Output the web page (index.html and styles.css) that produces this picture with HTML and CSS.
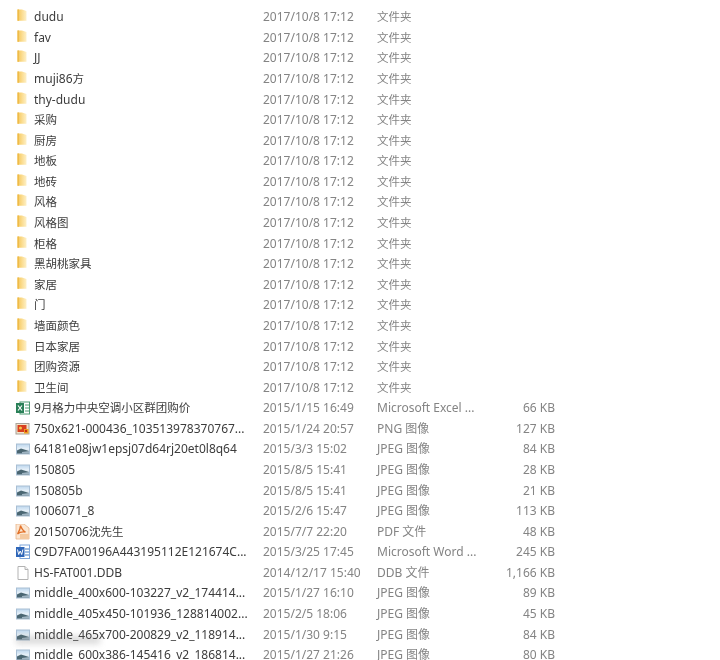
FILE: index.html
```html
<!DOCTYPE html>
<html lang="zh">
<head>
<meta charset="utf-8">
<title>文件列表</title>
<link rel="stylesheet" href="styles.css">
</head>
<body>
<svg class="defs" width="0" height="0" aria-hidden="true">
<defs>
<linearGradient id="fg" x1="0" y1="0" x2="1" y2="0"><stop offset="0" stop-color="#f3c557"/><stop offset="0.5" stop-color="#fbdc8f"/><stop offset="1" stop-color="#fdf0c8"/></linearGradient>
<linearGradient id="ig" x1="0" y1="0" x2="0" y2="1"><stop offset="0" stop-color="#bcd6ee"/><stop offset="0.45" stop-color="#e4eff8"/><stop offset="1" stop-color="#cfdbe6"/></linearGradient>
<symbol id="folder" viewBox="0 0 16 16"><path d="M2.500 .5h4.500l4.500 1.500v9.800h-9z" fill="url(#fg)"/><path d="M2.500 .5h1.500v11.300h-1.500z" fill="#efbb48"/></symbol>
<symbol id="image" viewBox="0 0 16 16"><rect x="1.500" y="3" width="13" height="10" fill="url(#ig)" stroke="#a9bfd4"/><path d="M2 9.500l4-2 8 2.500v2.500h-12z" fill="#4a6672"/><path d="M7 11l7-1v2.500h-7z" fill="#9fb4c2"/></symbol>
<symbol id="excel" viewBox="0 0 16 16"><rect x="5" y="2" width="9.500" height="12" fill="#fff" stroke="#4d9a72"/><path d="M10 5h4M10 8h4M10 11h4" stroke="#4d9a72"/><rect x="1" y="3" width="8" height="10" fill="#2a8058"/><path d="M3 5.500l4 5M7 5.500l-4 5" stroke="#fff" stroke-width="1.200"/></symbol>
<symbol id="png" viewBox="0 0 16 16"><rect x="1" y="2.500" width="13" height="10.500" fill="#f3e3c8" stroke="#a8a29a"/><rect x="2.500" y="4" width="9" height="7" fill="#d8401f"/><circle cx="5.500" cy="7" r="1.500" fill="#f6c64a"/><rect x="9" y="8" width="4.500" height="4.500" fill="#f0a020"/><circle cx="11" cy="10" r="1.200" fill="#c72f17"/></symbol>
<symbol id="pdf" viewBox="0 0 16 16"><path d="M1 0h8l5 4v11h-13z" fill="#fbe7d3" stroke="#eab58a" stroke-width="0.800"/><path d="M5.500 1.500c1 3 2 5 5 6.500-3-.5-6 0-8 2 1.500-2.500 3-5 3-8.500z" fill="none" stroke="#e2722a" stroke-width="1.300"/><rect x="5" y="10" width="9" height="5" fill="#f4c9a0"/></symbol>
<symbol id="word" viewBox="0 0 16 16"><rect x="5" y="1" width="9.500" height="13.500" fill="#fff" stroke="#7fa6da"/><path d="M10 5h4M10 8h4M10 11h4" stroke="#3d78c4"/><rect x="1" y="3" width="8.500" height="10" fill="#2f66b8"/><path d="M2.500 5.500l1.200 5 1.500-3.500 1.500 3.500 1.200-5" fill="none" stroke="#fff"/></symbol>
<symbol id="file" viewBox="0 0 16 16"><path d="M3 1.500h7l3 3v10h-10z" fill="#fff" stroke="#b3b3b3"/><path d="M10 1.500v3h3" fill="#eee" stroke="#b3b3b3"/></symbol>
</defs>
</svg>
<main class="list">
<div class="row"><svg class="ic"><use href="#folder"/></svg><span class="name">dudu</span><span class="date">2017/10/8 17:12</span><span class="type zh">文件夹</span><span class="size"></span></div>
<div class="row"><svg class="ic"><use href="#folder"/></svg><span class="name">fav</span><span class="date">2017/10/8 17:12</span><span class="type zh">文件夹</span><span class="size"></span></div>
<div class="row"><svg class="ic"><use href="#folder"/></svg><span class="name">JJ</span><span class="date">2017/10/8 17:12</span><span class="type zh">文件夹</span><span class="size"></span></div>
<div class="row"><svg class="ic"><use href="#folder"/></svg><span class="name">muji86<span class="zh">方</span></span><span class="date">2017/10/8 17:12</span><span class="type zh">文件夹</span><span class="size"></span></div>
<div class="row"><svg class="ic"><use href="#folder"/></svg><span class="name">thy-dudu</span><span class="date">2017/10/8 17:12</span><span class="type zh">文件夹</span><span class="size"></span></div>
<div class="row"><svg class="ic"><use href="#folder"/></svg><span class="name zh">采购</span><span class="date">2017/10/8 17:12</span><span class="type zh">文件夹</span><span class="size"></span></div>
<div class="row"><svg class="ic"><use href="#folder"/></svg><span class="name zh">厨房</span><span class="date">2017/10/8 17:12</span><span class="type zh">文件夹</span><span class="size"></span></div>
<div class="row"><svg class="ic"><use href="#folder"/></svg><span class="name zh">地板</span><span class="date">2017/10/8 17:12</span><span class="type zh">文件夹</span><span class="size"></span></div>
<div class="row"><svg class="ic"><use href="#folder"/></svg><span class="name zh">地砖</span><span class="date">2017/10/8 17:12</span><span class="type zh">文件夹</span><span class="size"></span></div>
<div class="row"><svg class="ic"><use href="#folder"/></svg><span class="name zh">风格</span><span class="date">2017/10/8 17:12</span><span class="type zh">文件夹</span><span class="size"></span></div>
<div class="row"><svg class="ic"><use href="#folder"/></svg><span class="name zh">风格图</span><span class="date">2017/10/8 17:12</span><span class="type zh">文件夹</span><span class="size"></span></div>
<div class="row"><svg class="ic"><use href="#folder"/></svg><span class="name zh">柜格</span><span class="date">2017/10/8 17:12</span><span class="type zh">文件夹</span><span class="size"></span></div>
<div class="row"><svg class="ic"><use href="#folder"/></svg><span class="name zh">黑胡桃家具</span><span class="date">2017/10/8 17:12</span><span class="type zh">文件夹</span><span class="size"></span></div>
<div class="row"><svg class="ic"><use href="#folder"/></svg><span class="name zh">家居</span><span class="date">2017/10/8 17:12</span><span class="type zh">文件夹</span><span class="size"></span></div>
<div class="row"><svg class="ic"><use href="#folder"/></svg><span class="name zh">门</span><span class="date">2017/10/8 17:12</span><span class="type zh">文件夹</span><span class="size"></span></div>
<div class="row"><svg class="ic"><use href="#folder"/></svg><span class="name zh">墙面颜色</span><span class="date">2017/10/8 17:12</span><span class="type zh">文件夹</span><span class="size"></span></div>
<div class="row"><svg class="ic"><use href="#folder"/></svg><span class="name zh">日本家居</span><span class="date">2017/10/8 17:12</span><span class="type zh">文件夹</span><span class="size"></span></div>
<div class="row"><svg class="ic"><use href="#folder"/></svg><span class="name zh">团购资源</span><span class="date">2017/10/8 17:12</span><span class="type zh">文件夹</span><span class="size"></span></div>
<div class="row"><svg class="ic"><use href="#folder"/></svg><span class="name zh">卫生间</span><span class="date">2017/10/8 17:12</span><span class="type zh">文件夹</span><span class="size"></span></div>
<div class="row"><svg class="ic"><use href="#excel"/></svg><span class="name">9<span class="zh">月格力中央空调小区群团购价</span></span><span class="date">2015/1/15 16:49</span><span class="type">Microsoft Excel ...</span><span class="size">66 KB</span></div>
<div class="row"><svg class="ic"><use href="#png"/></svg><span class="name">750x621-000436_103513978370767...</span><span class="date">2015/1/24 20:57</span><span class="type">PNG 图像</span><span class="size">127 KB</span></div>
<div class="row"><svg class="ic"><use href="#image"/></svg><span class="name">64181e08jw1epsj07d64rj20et0l8q64</span><span class="date">2015/3/3 15:02</span><span class="type">JPEG 图像</span><span class="size">84 KB</span></div>
<div class="row"><svg class="ic"><use href="#image"/></svg><span class="name">150805</span><span class="date">2015/8/5 15:41</span><span class="type">JPEG 图像</span><span class="size">28 KB</span></div>
<div class="row"><svg class="ic"><use href="#image"/></svg><span class="name">150805b</span><span class="date">2015/8/5 15:41</span><span class="type">JPEG 图像</span><span class="size">21 KB</span></div>
<div class="row"><svg class="ic"><use href="#image"/></svg><span class="name">1006071_8</span><span class="date">2015/2/6 15:47</span><span class="type">JPEG 图像</span><span class="size">113 KB</span></div>
<div class="row"><svg class="ic"><use href="#pdf"/></svg><span class="name">20150706<span class="zh">沈先生</span></span><span class="date">2015/7/7 22:20</span><span class="type">PDF 文件</span><span class="size">48 KB</span></div>
<div class="row"><svg class="ic"><use href="#word"/></svg><span class="name">C9D7FA00196A443195112E121674C...</span><span class="date">2015/3/25 17:45</span><span class="type">Microsoft Word ...</span><span class="size">245 KB</span></div>
<div class="row"><svg class="ic"><use href="#file"/></svg><span class="name">HS-FAT001.DDB</span><span class="date">2014/12/17 15:40</span><span class="type">DDB 文件</span><span class="size">1,166 KB</span></div>
<div class="row"><svg class="ic"><use href="#image"/></svg><span class="name">middle_400x600-103227_v2_174414...</span><span class="date">2015/1/27 16:10</span><span class="type">JPEG 图像</span><span class="size">89 KB</span></div>
<div class="row"><svg class="ic"><use href="#image"/></svg><span class="name">middle_405x450-101936_128814002...</span><span class="date">2015/2/5 18:06</span><span class="type">JPEG 图像</span><span class="size">45 KB</span></div>
<div class="row"><svg class="ic"><use href="#image"/></svg><span class="name">middle_465x700-200829_v2_118914...</span><span class="date">2015/1/30 9:15</span><span class="type">JPEG 图像</span><span class="size">84 KB</span></div>
<div class="row"><svg class="ic"><use href="#image"/></svg><span class="name">middle_600x386-145416_v2_186814...</span><span class="date">2015/1/27 21:26</span><span class="type">JPEG 图像</span><span class="size">80 KB</span></div>
</main>
<div class="smudge"></div>
</body>
</html>
```
FILE: styles.css
```css
html, body {
  margin: 0;
  padding: 0;
  background: #fff;
  overflow: hidden;
  height: 660px;
}
body {
  font-family: "Noto Sans", "Noto Sans CJK SC", sans-serif;
  font-size: 12px;
  color: #555;
}
.defs {
  position: absolute;
}
.list {
  padding-top: 7px;
  filter: blur(0.35px);
}
.row {
  display: grid;
  grid-template-columns: 16px 232px 114px 120px 58px;
  align-items: center;
  height: 20.58px;
  padding-left: 15px;
  white-space: nowrap;
  line-height: 20px;
}
.ic {
  width: 16px;
  height: 16px;
}
.name {
  padding-left: 3px;
  color: #3c3c3c;
}
.date,
.type,
.size {
  color: #848484;
}
.size {
  text-align: right;
}
.zh {
  font-size: 11.5px;
}
.smudge {
  position: absolute;
  left: 16px;
  top: 636px;
  width: 84px;
  height: 8px;
  background: rgba(120, 120, 120, 0.28);
  filter: blur(3px);
}
```
